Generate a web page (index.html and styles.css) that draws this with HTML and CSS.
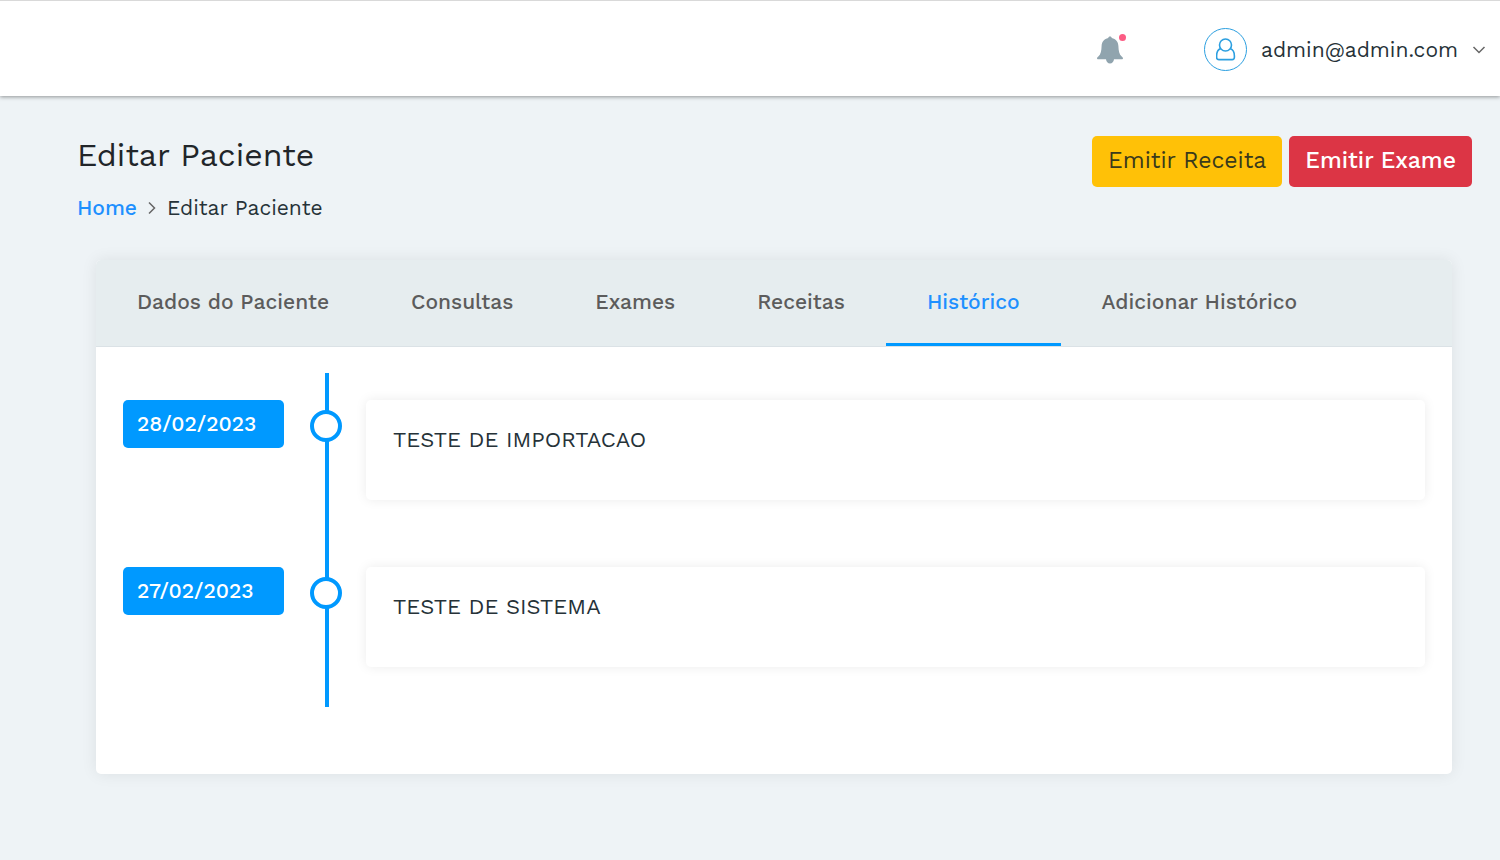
FILE: index.html
```
<!DOCTYPE html>
<html lang="pt-BR">
<head>
<meta charset="utf-8">
<title>Editar Paciente</title>
<meta name="viewport" content="width=device-width, initial-scale=1">
<link rel="stylesheet" href="styles.css">
</head>
<body>
<header class="topbar">
  <button class="bell" type="button" aria-label="Notificações">
    <svg width="26" height="28" viewBox="0 0 26 28" aria-hidden="true"><path fill="#90a4ae" d="M13 0.5c1 0 1.700.700 1.800 1.600C18.700 2.900 21.200 6 21.400 10c.2 5 .8 8.500 3.300 10.400.9.700 1.300 1.200 1.300 1.900 0 .6-.5 1-1.200 1H17c-.3 2.400-1.800 4.200-4 4.200s-3.700-1.800-4-4.200H1.200C.5 23.300 0 22.900 0 22.300c0-.7.400-1.200 1.300-1.900C3.800 18.500 4.400 15 4.600 10 4.800 6 7.300 2.900 11.200 2.100 11.300 1.200 12 .5 13 .5z"/></svg>
    <span class="bell-dot"></span>
  </button>
  <button class="user" type="button">
    <span class="avatar"><svg width="20" height="24" viewBox="0 0 20 24" fill="none" stroke="#2c9fe0" stroke-width="1.600" aria-hidden="true"><circle cx="9.500" cy="7" r="6"/><path d="M4.800 10.600C1.900 11.600.6 14.200.6 18.100v1.200c0 1.600.8 2.300 2.300 2.300h13.200c1.500 0 2.300-.7 2.300-2.300v-1.200c0-3.900-1.300-6.500-4.200-7.500"/></svg></span>
    <span class="user-name">admin@admin.com</span>
    <svg class="caret" width="14" height="8" viewBox="0 0 14 8" fill="none" stroke="#666" stroke-width="1.500" aria-hidden="true"><path d="M1.500 1 7 6.500 12.500 1"/></svg>
  </button>
</header>
<main class="page">
  <div class="page-head">
    <div class="heading">
      <h1 class="title">Editar Paciente</h1>
      <nav class="crumbs" aria-label="Navegação">
        <a class="crumb-link" href="#">Home</a>
        <svg width="8" height="14" viewBox="0 0 8 14" fill="none" stroke="#666" stroke-width="1.500" aria-hidden="true"><path d="M1 1.500 6.500 7 1 12.500"/></svg>
        <span>Editar Paciente</span>
      </nav>
    </div>
    <div class="actions">
      <button class="btn btn-warning" type="button">Emitir Receita</button>
      <button class="btn btn-danger" type="button">Emitir Exame</button>
    </div>
  </div>
  <section class="panel">
    <nav class="tabs" aria-label="Paciente">
      <a class="tab" href="#">Dados do Paciente</a>
      <a class="tab" href="#">Consultas</a>
      <a class="tab" href="#">Exames</a>
      <a class="tab" href="#">Receitas</a>
      <a class="tab active" href="#" aria-current="page">Histórico</a>
      <a class="tab" href="#">Adicionar Histórico</a>
    </nav>
    <ol class="timeline">
      <li class="entry">
        <time class="date" datetime="2023-02-28">28/02/2023</time>
        <span class="rail"></span>
        <p class="note">TESTE DE IMPORTACAO</p>
      </li>
      <li class="entry">
        <time class="date" datetime="2023-02-27">27/02/2023</time>
        <span class="rail"></span>
        <p class="note">TESTE DE SISTEMA</p>
      </li>
    </ol>
  </section>
</main>
</body>
</html>
```
FILE: styles.css
```
*, *::before { box-sizing: border-box; }
body {
  margin: 0;
  min-height: 100vh;
  background: #eef3f6;
  color: #263238;
  font: 400 21px/28px "Work Sans", Inter, sans-serif;
}
button { font: inherit; color: inherit; border: 0; background: none; padding: 0; cursor: pointer; }
a { text-decoration: none; }
svg { display: block; flex: none; }

.topbar {
  display: flex;
  align-items: center;
  justify-content: flex-end;
  gap: 81px;
  padding: 27px 14px 25px;
  border-top: 1px solid #d9d9d9;
  background: #fff;
  box-shadow: 0 1px 4px rgba(0, 0, 0, .4);
}
.bell { position: relative; }
.bell-dot {
  position: absolute;
  top: -2px;
  right: -3px;
  width: 7px;
  height: 7px;
  border-radius: 50%;
  background: #fc5c84;
}
.user { display: flex; align-items: center; gap: 14px; }
.avatar {
  display: flex;
  align-items: center;
  justify-content: center;
  width: 43px;
  height: 43px;
  border: 1px solid #2c9fe0;
  border-radius: 50%;
}

.page { padding: 40px 28px; }
.page-head { display: flex; justify-content: space-between; align-items: flex-start; padding-left: 49px; }
.title { margin: 0 0 20px; font-size: 32px; line-height: 38px; font-weight: 400; color: #212529; }
.crumbs { display: flex; align-items: center; gap: 11px; }
.crumb-link { color: #1e90ff; font-weight: 500; }
.actions { display: flex; gap: 7px; }
.btn { padding: 11px 16px 12px; border-radius: 5px; font-size: 23px; }
.btn-warning { background: #ffc107; color: #3a3a1c; }
.btn-danger { background: #dc3545; color: #fff; font-weight: 500; }

.panel {
  margin: 38px 20px 0 68px;
  padding-bottom: 67px;
  border-radius: 5px;
  background: #fff;
  box-shadow: 0 0 16px rgba(0, 0, 0, .08);
}
.tabs {
  display: flex;
  border-bottom: 1px solid #dbe2e6;
  border-radius: 5px 5px 0 0;
  background: #e6edef;
}
.tab {
  padding: 28px 41px 27px;
  border-bottom: 3px solid transparent;
  color: #5c5c5c;
  font-weight: 500;
}
.tab.active { color: #1e90ff; border-color: #0099ff; }

.timeline { margin: 0; padding: 26px 27px 0; list-style: none; }
.entry {
  display: grid;
  grid-template-columns: 161px 34px 1fr;
  column-gap: 24px;
  align-items: start;
}
.date {
  margin-top: 27px;
  padding: 10px 14px;
  border-radius: 5px;
  background: #0099ff;
  color: #fff;
  font-weight: 500;
}
.rail {
  align-self: stretch;
  padding-top: 37px;
  background: linear-gradient(#0099ff, #0099ff) 17px 0 / 4px 100% no-repeat;
}
.rail::before {
  content: "";
  display: block;
  width: 32px;
  height: 32px;
  margin-left: auto;
  border: 4px solid #0099ff;
  border-radius: 50%;
  background: #fff;
}
.note {
  margin: 27px 0 40px;
  padding: 26px 27px 46px;
  border-radius: 5px;
  box-shadow: 0 0 12px rgba(0, 0, 0, .08);
  font-size: 22px;
}
```
